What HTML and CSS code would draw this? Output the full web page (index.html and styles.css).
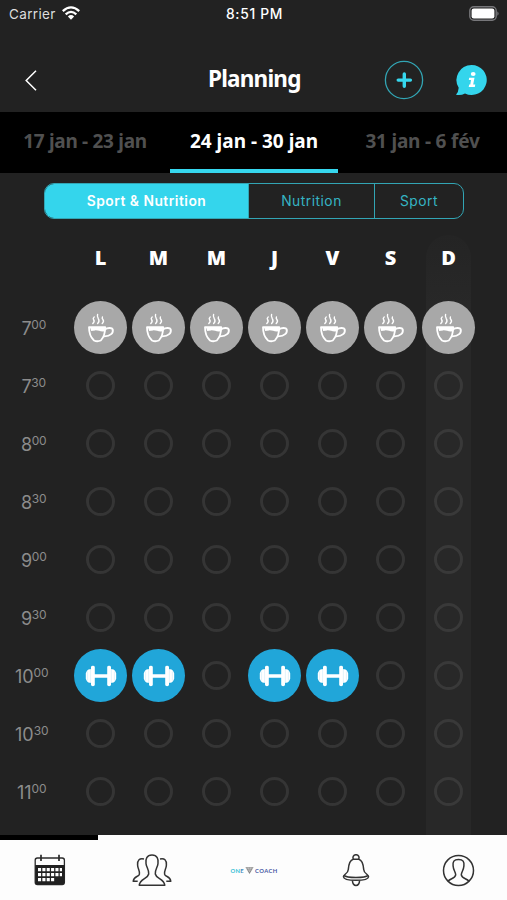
FILE: index.html
```html
<!DOCTYPE html>
<html lang="fr">
<head>
<meta charset="utf-8">
<title>Planning</title>
<link rel="stylesheet" href="styles.css">
</head>
<body>
<svg class="defs" aria-hidden="true">
  <symbol id="cup" viewBox="0 0 28 30">
    <g fill="none" stroke="#fff" stroke-linecap="round" stroke-linejoin="round">
      <path stroke-width="1.8" d="M2 14.2H18.2C18.2 21 16.5 24.6 13.8 27.5Q10.2 29 7 27.5C3.8 24.5 2 20.5 2 14.2Z"/>
      <path stroke-width="1.9" d="M18.2 16.2C20 14.9 24.9 14.1 25.7 16.4C26.6 20 23.5 23 17.4 23.4"/>
      <path stroke-width="1.4" d="M5.8 10.6Q8 8.5 6.6 6.8Q5.6 5.2 7.2 4M10.6 10.6Q13 8 11.3 5.6Q9.8 3.2 10.6 1.5M15.2 10.6Q17.3 8.5 16 6.8Q14.8 5.2 15.4 4"/>
    </g>
    <path fill="#fff" d="M3 14.5H17.8V18.2C14 19.4 11.4 17 8 17.4L4.2 18Z"/>
  </symbol>
  <symbol id="bar" viewBox="0 0 32 22">
    <path fill="#fff" d="M0.8 8.2Q2.2 4.2 4.6 4.2H6V2.2Q6 .8 7.9 .8T9.8 2.2V9.2H22.2V2.2Q22.2 .8 24.1 .8T26 2.2V4.2H27.4Q29.8 4.2 31.2 8.2V13.8Q29.8 17.8 27.4 17.8H26V19.8Q26 21.2 24.1 21.2T22.2 19.8V12.8H9.8V19.8Q9.8 21.2 7.9 21.2T6 19.8V17.8H4.6Q2.2 17.8.8 13.8Z"/>
    <path fill="none" stroke="#b5e0f3" stroke-width=".4" d="M5.6 4.5V17.5M26.4 4.5V17.5M2.6 6.5V15.5M29.4 6.5V15.5"/>
  </symbol>
</svg>
<div class="app">
  <div class="status">
    <div class="carrier"><span>Carrier</span>
      <svg width="18" height="14" viewBox="0 0 18 14"><g fill="none" stroke="#fff" stroke-width="2.3"><path d="M.8 5.2Q9-2.5 17.2 5.2"/><path d="M3.7 8.3Q9 3.4 14.3 8.3"/></g><path fill="#fff" d="M5.9 10.4Q9 7.8 12.1 10.4L9 13.7Z"/></svg>
    </div>
    <div class="clock">8:51 PM</div>
    <svg class="battery" width="31" height="15" viewBox="0 0 31 15"><rect x=".8" y=".8" width="26.4" height="13.4" rx="4" fill="none" stroke="#77777a" stroke-width="1.4"/><rect x="2.6" y="2.6" width="22.8" height="9.8" rx="2.2" fill="#fff"/><path d="M28.3 5.2Q31 7.5 28.3 9.8Z" fill="#77777a"/></svg>
  </div>
  <header class="nav">
    <svg class="back" width="12" height="21" viewBox="0 0 12 21"><path d="M11 .8L1.2 10.5L11 20.2" fill="none" stroke="#fff" stroke-width="1.5"/></svg>
    <h1>Planning</h1>
    <svg class="add" width="40" height="40" viewBox="0 0 40 40"><circle cx="20" cy="20" r="18.6" fill="none" stroke="#32a5b4" stroke-width="1.3"/><path d="M20.3 14V26.2M14.2 20.1H26.4" stroke="#36d7ee" stroke-width="3.4" stroke-linecap="round"/></svg>
    <svg class="info" width="32" height="32" viewBox="0 0 32 32"><path fill="#34d5ec" d="M16.5 1A15 15 0 1 1 10 29.4Q5.8 31.8 1 30.7Q3.5 28 3.7 23.8A15 15 0 0 1 16.5 1Z"/><g fill="#fff"><ellipse cx="18.2" cy="10" rx="2.4" ry="2.1"/><path d="M14.2 13.7H19.5L18.2 20.6H20.3L19.8 23H13.7L14.2 20.6H15.3L16 16.1H13.8Z"/></g></svg>
  </header>
  <nav class="weeks"><span class="past">17 jan - 23 jan</span><span class="current">24 jan - 30 jan</span><span>31 jan - 6 fév</span></nav>
  <div class="filter"><span class="on">Sport &amp; Nutrition</span><span>Nutrition</span><span>Sport</span></div>
  <main class="planner">
    <div class="today"></div>
    <div class="row days"><b></b><b>L</b><b>M</b><b>M</b><b>J</b><b>V</b><b>S</b><b>D</b></div>
    <div class="row"><div class="time">7<sup>00</sup></div><i class="meal"><svg><use href="#cup"/></svg></i><i class="meal"><svg><use href="#cup"/></svg></i><i class="meal"><svg><use href="#cup"/></svg></i><i class="meal"><svg><use href="#cup"/></svg></i><i class="meal"><svg><use href="#cup"/></svg></i><i class="meal"><svg><use href="#cup"/></svg></i><i class="meal"><svg><use href="#cup"/></svg></i></div>
    <div class="row"><div class="time">7<sup>30</sup></div><i></i><i></i><i></i><i></i><i></i><i></i><i></i></div>
    <div class="row"><div class="time">8<sup>00</sup></div><i></i><i></i><i></i><i></i><i></i><i></i><i></i></div>
    <div class="row"><div class="time">8<sup>30</sup></div><i></i><i></i><i></i><i></i><i></i><i></i><i></i></div>
    <div class="row"><div class="time">9<sup>00</sup></div><i></i><i></i><i></i><i></i><i></i><i></i><i></i></div>
    <div class="row"><div class="time">9<sup>30</sup></div><i></i><i></i><i></i><i></i><i></i><i></i><i></i></div>
    <div class="row"><div class="time ten">10<sup>00</sup></div><i class="gym"><svg><use href="#bar"/></svg></i><i class="gym"><svg><use href="#bar"/></svg></i><i></i><i class="gym"><svg><use href="#bar"/></svg></i><i class="gym"><svg><use href="#bar"/></svg></i><i></i><i></i></div>
    <div class="row"><div class="time ten">10<sup>30</sup></div><i></i><i></i><i></i><i></i><i></i><i></i><i></i></div>
    <div class="row"><div class="time ten">11<sup>00</sup></div><i></i><i></i><i></i><i></i><i></i><i></i><i></i></div>
  </main>
  <footer class="tabs">
    <div class="tab active"><svg width="32" height="32" viewBox="0 0 32 32"><rect x="1.2" y="4" width="29.2" height="26.5" rx="2.2" fill="none" stroke="#2b2b2b" stroke-width="1.3"/><path fill="#202020" d="M1.2 11H30.4V28.5Q30.4 30.5 28 30.5H3.6Q1.2 30.5 1.2 28.5Z"/><path stroke="#2b2b2b" stroke-width="1.7" d="M7 .8V7M25 .8V7"/><path stroke="#fff" stroke-width="3.1" stroke-dasharray="3.1 1.25" d="M4 15.6H28M4 20.6H28M4 25.6H20.2"/></svg></div>
    <div class="tab"><svg width="40" height="33" viewBox="0 0 40 33"><g fill="none" stroke="#333" stroke-width="1.5" stroke-linejoin="round"><path d="M20 1C14.7 1 13.4 5 14 9.5C14.2 13 17.2 15.8 16.7 20C15.8 25 8 24.5 7.2 31.2H32.8C32 24.5 24.2 25 23.3 20C22.8 15.8 25.8 13 26 9.5C26.6 5 25.3 1 20 1Z"/><path d="M12 5Q5.2 3.5 5.6 11C5.7 15 8.2 17 7.4 20.3C6.5 23.2 1.8 22 1.2 27.3H5.7M28 5Q34.8 3.5 34.4 11C34.3 15 31.8 17 32.6 20.3C33.5 23.2 38.2 22 38.8 27.3H34.3"/></g></svg></div>
    <div class="tab"><div class="brand"><span class="one"><em>O</em><em>N</em><em>E</em></span><svg width="9" height="9" viewBox="0 0 10 9"><path d="M.5 1H9.5L5 8.3Z" fill="#858585"/><path d="M1 2.3H9M2.4 4H7.6M3.5 1L5 6L6.5 1" fill="none" stroke="#ddd" stroke-width=".45"/></svg><span class="coach">COACH</span></div></div>
    <div class="tab"><svg width="28" height="33" viewBox="0 0 28 33"><g fill="none" stroke="#333" stroke-width="1.5" stroke-linejoin="round"><path d="M11.4 5.2A3 3 0 1 1 16.6 5.2M11.2 5.2C6.9 6.5 6.6 12 6.3 15.5C6 20 1.6 19.8 1.4 22.8C1.8 27.5 26.2 27.5 26.6 22.8C26.4 19.8 22 20 21.7 15.5C21.4 12 21.1 6.5 16.8 5.2Z"/><path d="M1.8 21.4C5 24.3 23 24.3 26.2 21.4M10.4 26.4Q10.7 31.5 14 31.5T17.6 26.4"/></g></svg></div>
    <div class="tab"><svg width="33" height="33" viewBox="0 0 33 33"><g fill="none" stroke="#333" stroke-width="1.5"><circle cx="16.5" cy="16.5" r="15"/><path d="M6 27.3C8.2 24.2 13 25 13.7 20.8C13.7 18.2 11.3 16 11.1 12C10.6 7.7 11.8 5.4 16.5 5.4S22.4 7.7 21.9 12C21.7 16 19.3 18.2 19.3 20.8C20 25 24.8 24.2 27 27.3"/></g></svg></div>
  </footer>
</div>
</body>
</html>
```
FILE: styles.css
```css
* { box-sizing: border-box; }
body { margin: 0; background: #222; color: #fff; font-family: Inter, sans-serif; }
.defs { position: absolute; width: 0; height: 0; }
.app { width: 507px; height: 900px; overflow: hidden; display: flex; flex-direction: column; }
svg { display: block; flex: none; }

.status { height: 28px; display: grid; grid-template-columns: 1fr 1fr 1fr; align-items: center; padding: 0 7px 0 9px; font-size: 13.5px; line-height: 28px; }
.carrier { display: flex; align-items: center; gap: 6px; color: #ddd; letter-spacing: .35px; }
.carrier svg { margin-top: -2px; }
.clock { text-align: center; font-weight: 500; font-size: 13.8px; letter-spacing: .7px; white-space: nowrap; }
.battery { justify-self: end; margin-top: -1px; }

.nav { height: 84px; display: grid; grid-template-columns: 25px 183px 176px 71px 52px; align-items: center; }
.back { grid-area: 1 / 2; margin-top: 20px; }
.nav h1 { grid-area: 1 / 3; margin: 18px 0 0; font: 700 22.5px/34px "Noto Sans", sans-serif; letter-spacing: -.8px; white-space: nowrap; }
.add { grid-area: 1 / 4; margin-top: 20px; }
.info { grid-area: 1 / 5; margin-top: 20px; }

.weeks { height: 61px; flex: none; background: #000; display: grid; grid-template-columns: 170px 168px 169px; grid-template-rows: 61px; font: 700 19px/57px "Noto Sans", sans-serif; letter-spacing: -.2px; text-align: center; color: #505050; white-space: nowrap; }
.weeks span { padding-top: 1px; }
.weeks .current { color: #fff; border-bottom: 4px solid #36d7ee; letter-spacing: 0; }
.weeks .past { letter-spacing: -.3px; }

.filter { flex: none; width: 420px; height: 36px; margin: 10px 0 0 44px; border: 1.5px solid #32a5b4; border-radius: 10px; overflow: hidden; display: grid; grid-template-columns: 203px 126px 1fr; line-height: 35px; font-size: 13.8px; letter-spacing: .5px; text-align: center; color: #35b4c4; }
.filter span + span { border-left: 1.5px solid #32a5b4; }
.filter .on { background: #34d5ec; color: #fff; font-weight: 600; letter-spacing: .5px; }

.planner { position: relative; flex: none; height: 616px; padding-top: 15.5px; }
.today { position: absolute; left: 426px; top: 16px; width: 45px; bottom: 0; border-radius: 23px 23px 0 0; background: linear-gradient(#242424, #282828 70px); }
.row { position: relative; height: 58px; display: grid; grid-template-columns: 71.5px repeat(7, 58px); align-items: center; justify-items: center; }
.days { height: 64px; padding-bottom: 18px; font: 700 20px/30px "Noto Sans", sans-serif; }
.time { font-size: 18px; font-weight: 400; color: #8c8c8c; line-height: 24px; display: flex; align-items: center; letter-spacing: -.4px; padding: 2px 4px 0 0; }
.ten { padding-right: 8px; letter-spacing: 0; }
.time sup { font-size: 12px; line-height: 14px; vertical-align: baseline; margin-top: -8px; letter-spacing: -.1px; }
.row i { width: 29px; height: 29px; border: 3px solid #353535; border-radius: 50%; display: grid; place-items: center; }
.row i:last-child { border-color: #393939; }
.row .meal, .row .gym { width: 53px; height: 53px; border: 0; }
.meal { background: #a8a8a8; }
.gym { background: #21a6d9; }
.meal svg { width: 28px; height: 30px; }
.gym svg { width: 32px; height: 22px; }

.tabs { flex: none; height: 65px; background: #fdfdfd; display: grid; grid-template-columns: 98px 108px 96px 108px 97px; }
.tab { display: grid; place-items: center; padding-top: 5px; }
.active { box-shadow: inset 0 5px #000; padding-left: 2px; }
.brand { display: flex; align-items: center; gap: 1px; font: 700 5.8px/9px Lato, sans-serif; color: #4557a3; letter-spacing: .4px; }
.one em { font-style: normal; color: #36bfd5; }
.one em:last-child { color: #448bbd; }
```
